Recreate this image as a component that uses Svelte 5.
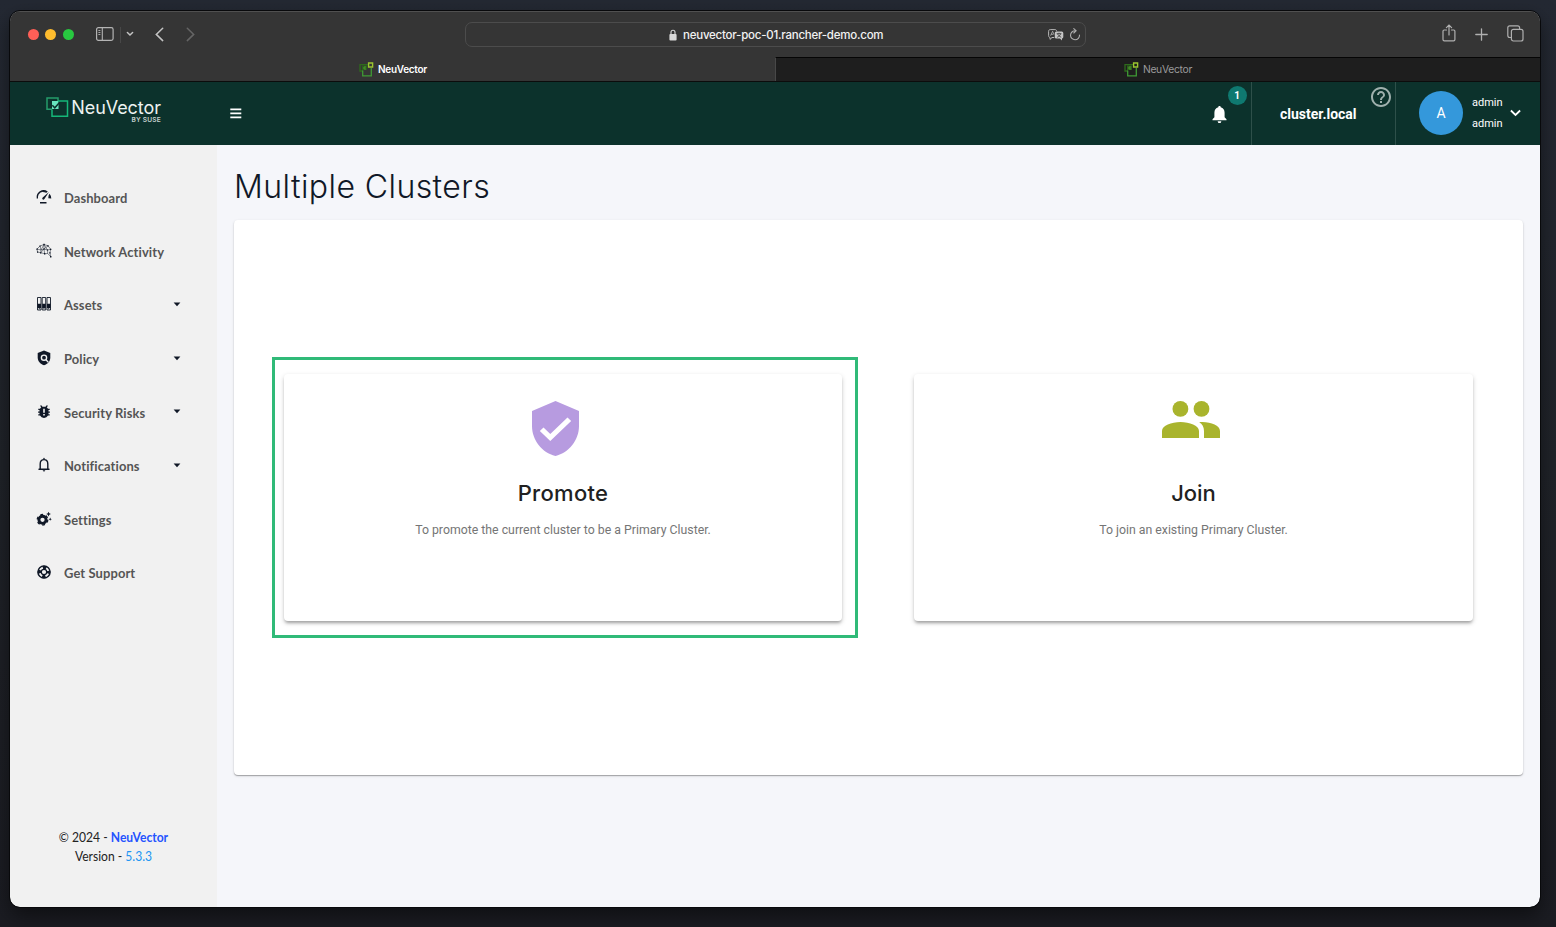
<script>
  const items = [
    { label: 'Dashboard', icon: 'gauge' },
    { label: 'Network Activity', icon: 'network' },
    { label: 'Assets', icon: 'assets', caret: true },
    { label: 'Policy', icon: 'policy', caret: true },
    { label: 'Security Risks', icon: 'bug', caret: true },
    { label: 'Notifications', icon: 'bell', caret: true },
    { label: 'Settings', icon: 'gear' },
    { label: 'Get Support', icon: 'support' }
  ];
</script>

{#snippet favicon()}
  <svg class="fav" width="15" height="15" viewBox="0 0 15 15" fill="none">
    <path d="M9 2.6H1V9h3" stroke="#2f6b1c" stroke-width="1.3" />
    <path d="M3 3.5h5V8H3z" fill="#2b5f1b" />
    <path d="M7 5H5v2h2" stroke="#4a9a2c" />
    <path d="M3.7 8.5v5.3h8.6V6" stroke="#3f9a35" stroke-width="1.3" />
    <path d="M9.6 1h4v4h-4z" stroke="#9bc62f" stroke-width="1.4" />
  </svg>
{/snippet}

<div class="desktop">
  <div class="window">
    <div class="toolbar">
      <div class="tools-left">
        <div class="lights"><i class="red"></i><i class="yellow"></i><i class="green"></i></div>
        <svg class="side" width="18" height="14" viewBox="0 0 18 14" fill="none" stroke="#b4b4b4">
          <rect x=".6" y=".6" width="16.5" height="12.8" rx="1.8" stroke-width="1.2" />
          <path d="M6.3 1v12" stroke-width="1.1" /><path d="M2.4 3.5h2M2.4 5.5h2M2.4 7.5h2" stroke-width=".9" />
        </svg>
        <span class="sep"></span>
        <svg class="mini" width="8" height="6" viewBox="0 0 8 6" fill="none" stroke="#c4c4c4" stroke-width="1.5" stroke-linecap="round"><path d="M1.4 1.500 4 4l2.600-2.500" /></svg>
        <svg class="back" width="9" height="15" viewBox="0 0 9 15" fill="none" stroke="#c4c4c4" stroke-width="1.500" stroke-linecap="round"><path d="M7.700 1.300 1.300 7.400l6.400 6.200" /></svg>
        <svg class="forward" width="9" height="15" viewBox="0 0 9 15" fill="none" stroke="#656565" stroke-width="1.500" stroke-linecap="round"><path d="m1.300 1.300 6.400 6.100-6.400 6.200" /></svg>
      </div>
      <div class="address">
        <svg class="lock" width="8" height="12" viewBox="0 0 8 12"><rect x=".4" y="5" width="7.200" height="6.400" rx="1" fill="#d8d8d8" /><path d="M2 5.300V3.200a2 2 0 0 1 4 0v2.100" fill="none" stroke="#d8d8d8" stroke-width="1.100" /></svg>
        <span class="url">neuvector-poc-01.rancher-demo.com</span>
        <svg class="translate" width="16" height="12" viewBox="0 0 16 12" fill="none">
          <path d="M6.300 8.500H4L2 10.400V8.500C1 8.300.6 7.600.6 6.700V2.300C.6 1.200 1.200.6 2.300.6h4.600c1 0 1.700.5 1.700 1.600" stroke="#b7b7b7" />
          <path d="m2.600 6.700 2-4.400 1.400 3M3.200 5.300h2.300" stroke="#b7b7b7" stroke-width=".8" />
          <path d="M8.300 2.500h5.500q1.500 0 1.500 1.500v4q0 1.400-1.300 1.500v2l-2-2H8.300q-1.500 0-1.500-1.500V4q0-1.500 1.500-1.500Z" fill="#c5c5c5" />
          <path d="M8.700 4.700h4.700M11 3.700v1M12.600 4.800c-.5 1.600-1.600 2.700-3.500 3.500m.5-3.500c.6 1.600 1.800 2.700 3.600 3.400" stroke="#353535" stroke-width=".8" />
        </svg>
        <svg class="reload" width="12" height="13" viewBox="0 0 12 13" fill="none" stroke="#adadad" stroke-width="1.100" stroke-linecap="round"><path d="M6.300 2.800A4.500 4.500 0 1 0 10.500 7M4.800.7l2.300 2.100-2.300 2.200" /></svg>
      </div>
      <div class="tools-right">
        <svg class="share" width="14" height="18" viewBox="0 0 14 18" fill="none" stroke="#b0b0b0" stroke-width="1.200" stroke-linecap="round"><path d="M4.500 6H2.200Q1 6 1 7.200v8.300q0 1.300 1.300 1.300h9.300q1.300 0 1.300-1.300V7.200Q12.900 6 11.700 6H9.500M7 11V1.200M4.400 3.700 7 1.100l2.600 2.600" /></svg>
        <svg width="13" height="13" viewBox="0 0 13 13" stroke="#b0b0b0" stroke-width="1.300" stroke-linecap="round"><path d="M6.500.8v11.400M.8 6.500h11.400" /></svg>
        <svg class="copies" width="17" height="17" viewBox="0 0 17 17" fill="none" stroke="#b0b0b0" stroke-width="1.200"><rect x="4.400" y="4.400" width="11.600" height="11.600" rx="2" /><path d="M4.400 12.500H2.800q-2 0-2-2V2.800q0-2 2-2h7.800q2 0 2 2v1.600" /></svg>
      </div>
    </div>

    <div class="tabs">
      <div class="tab active">{@render favicon()}<span>NeuVector</span></div>
      <div class="tab">{@render favicon()}<span>NeuVector</span></div>
    </div>

    <header>
      <div class="brand">
        <svg width="23" height="21" viewBox="0 0 23 21" fill="none">
          <path d="M6 12.200H1V1h11v3" stroke="#249c6a" stroke-width="1.500" />
          <path d="M6 4h6.500v8H6z" fill="#69e5bf" />
          <path d="M6 12.500v6.800h15.500V4H12" stroke="#15b779" stroke-width="1.500" />
          <path d="m6.300 8.300 2.500 2.500 4.500-5" stroke="#0c322c" stroke-width="1.500" />
        </svg>
        <div class="wordmark"><span class="name">NeuVector</span><span class="by">BY SUSE</span></div>
      </div>
      <svg class="burger" width="12" height="11" viewBox="0 0 12 11" fill="#fff"><path d="M.3.5h11v1.700H.3zM.3 4.500h11v1.700H.3zM.3 8.500h11v1.700H.3z" /></svg>
      <div class="alerts">
        <svg width="15" height="18" viewBox="0 0 15 18" fill="#fff"><path d="M7.500 0c.8 0 1.200.5 1.200 1.300C11.300 2 12.600 4 12.600 6.700v4.600l1.900 2v1H.5v-1l1.900-2V6.700C2.400 4 3.700 2 6.300 1.300 6.300.5 6.700 0 7.500 0ZM5.700 15.200h3.600c0 1.200-.8 1.900-1.800 1.900s-1.800-.7-1.800-1.900Z" /></svg>
        <span class="badge">1</span>
      </div>
      <div class="cluster">
        <span>cluster.local</span>
        <svg class="help" width="24" height="24" viewBox="0 0 24 24" fill="#9fb0ad"><path d="M11 18h2v-2h-2v2zm1-16C6.480 2 2 6.480 2 12s4.480 10 10 10 10-4.480 10-10S17.520 2 12 2zm0 18c-4.410 0-8-3.590-8-8s3.590-8 8-8 8 3.590 8 8-3.590 8-8 8zm0-14c-2.210 0-4 1.790-4 4h2c0-1.100.9-2 2-2s2 .9 2 2c0 2-3 1.750-3 5h2c0-2.250 3-2.500 3-5 0-2.210-1.790-4-4-4z" /></svg>
      </div>
      <div class="user">
        <span class="avatar">A</span>
        <div class="names"><span>admin</span><span>admin</span></div>
        <svg width="11" height="8" viewBox="0 0 11 8" fill="none" stroke="#fff" stroke-width="1.800"><path d="m.9 1.500 4.600 4.400 4.600-4.400" /></svg>
      </div>
    </header>

    <div class="body">
      <aside>
        <nav>
          {#each items as item}
            <div class="item">
              <svg class="icon" width="16" height="16" viewBox="0 0 16 16" fill="#101827" stroke="#101827" stroke-width="0">
                {#if item.icon === 'gauge'}
                  <path d="M1.500 9.500A6.300 6.300 0 0 1 11.300 3" fill="none" stroke-width="1.300" />
                  <path d="M4.500 3.200Q7.700.9 11.300 2.700l-1.200 1Q7.500 2.600 4.500 3.200Z" />
                  <path d="m13 2.900-4.600 7.200q-.9 1-1.900.2-.8-1 .2-1.900ZM13.600 4.800q1.600 2 1.700 4.800l-3-.3.300-2.700ZM4 13.100h6.500v1.400H4z" />
                {:else if item.icon === 'network'}
                  <path d="m1 6 3-3 4-1.500 4 1.300 2.700 3.500-.8 3.500.8 3.700-3-3-3 .2-4-1L1.500 9 1 6l4 1 3-1 3.500 1 3-.7M4 3l1 4-.3 2.700M8 1.500V6l.7 4.700M12 2.800 8 6 4.700 9.700M5 7l3-5.500L11.500 7l.2 3.500" fill="none" stroke-width=".5" />
                  <path d="M.4 5.400h1.300v1.300H.4zM3.400 2.400h1.200v1.200H3.400zM7.400.8h1.300v1.300H7.400zM11.400 2.200h1.300v1.300h-1.300zM14 5.700h1.300V7H14zM13.300 9.200h1.300v1.300h-1.300zM14 13h1.400v1.400H14zM1 8.500h1.200v1.200H1zM4 9.200h1.300v1.200H4zM8 10.100h1.300v1.300H8zM7.400 5.400h1.200v1.200H7.400zM10.900 6.400h1.200v1.200h-1.200z" />
                {:else if item.icon === 'assets'}
                  <path d="M1.500 1.500h3.500v12.500H1.500zM6.200 1.500h3.500v12.500H6.200zM11 1.500h3.500v12.500H11z" fill="#f1f1f1" stroke-width=".9" />
                  <path d="M1.500 7.800H5V12H1.500zM6.200 7.800h3.500V12H6.200zM11 7.800h3.500V12H11zM2.800 12h.9v1.200h-.9zM7.500 12h.9v1.200h-.9zM12.300 12h.9v1.200h-.9z" />
                {:else if item.icon === 'policy'}
                  <path d="m8 .5 6.300 2.500v4.500c0 3.700-2.500 6.600-6.300 7.800-3.800-1.200-6.300-4.100-6.300-7.800V3Z" />
                  <circle cx="8" cy="7.700" r="2.600" fill="none" stroke="#f1f1f1" stroke-width="1.400" /><path d="m9.700 9.500 2.600 2.700" stroke="#f1f1f1" stroke-width="1.300" />
                {:else if item.icon === 'bug'}
                  <path d="m5 1 1.500 1.700h3L11 1l.8.9-1 1.300 1.200 1.600h1.700V6h-1.200v1.500h1.400v1.300h-1.400v1.500h1.200v1.300H12A4.500 4.500 0 0 1 8 14a4.500 4.500 0 0 1-4-2.400H2.300v-1.300h1.200V8.800H2.100V7.500h1.400V6H2.300V4.800H4l1.200-1.600-1-1.300Z" /><path d="M7.200 4.800h1.600v4H7.200zM7.200 10h1.600v1.500H7.200z" fill="#f1f1f1" />
                {:else if item.icon === 'bell'}
                  <path d="M8 1.500v1M3 12.300h10M4.200 12V7c0-2.800 1.400-4.400 3.800-4.400s3.800 1.600 3.800 4.400v5" fill="none" stroke-width="1.400" stroke-linecap="round" /><path d="M6.700 13.200h2.600Q9 14.500 8 14.500t-1.300-1.300Z" />
                {:else if item.icon === 'gear'}
                  <circle cx="6.500" cy="8.800" r="3.600" fill="none" stroke-width="2.900" />
                  <circle cx="6.500" cy="8.800" r="5.200" fill="none" stroke-width="1.500" stroke-dasharray="2.700 2.745" />
                  <path d="m12.500.7.8 1.600 1.600.8-1.600.7-.8 1.600-.7-1.600-1.600-.7 1.600-.8ZM14.200 6.600l.5 1.100 1.100.5-1.100.5-.5 1.100-.5-1.100-1.100-.5 1.100-.5Z" />
                {:else}
                  <circle cx="8" cy="8" r="6.100" fill="none" stroke-width="1.400" /><circle cx="8" cy="8" r="2.700" fill="none" stroke-width="1.200" />
                  <circle cx="8" cy="8" r="4.600" fill="none" stroke-width="3.400" stroke-dasharray="3.600 3.626" stroke-dashoffset="1.800" />
                {/if}
              </svg>
              <span class="label">{item.label}</span>
              {#if item.caret}
                <svg class="caret" width="8" height="5" viewBox="0 0 8 5" fill="#101827"><path d="M.6.500h6.800L4 4.200Z" /></svg>
              {/if}
            </div>
          {/each}
        </nav>
        <div class="foot">
          <div>© 2024 - <b>NeuVector</b></div>
          <div>Version - <span>5.3.3</span></div>
        </div>
      </aside>

      <main>
        <h1>Multiple Clusters</h1>
        <section class="panel">
          <article class="card selected">
            <svg class="art" width="47" height="55" viewBox="3 1 18 22" preserveAspectRatio="none" fill="#b79be0"><path d="M12 1L3 5v6c0 5.550 3.840 10.740 9 12 5.160-1.260 9-6.450 9-12V5l-9-4zm-2 16l-4-4 1.410-1.410L10 14.170l6.590-6.590L18 9l-8 8z" /></svg>
            <h2 class="promote">Promote</h2>
            <p>To promote the current cluster to be a Primary Cluster.</p>
          </article>
          <article class="card">
            <svg class="art people" width="58" height="55" viewBox="0 0 58 55" fill="#a9b42d">
              <circle cx="18.400" cy="7.900" r="7.900" /><circle cx="39.500" cy="7.900" r="7.900" />
              <path d="M0 37v-7c0-5.300 9.500-9 18.500-9S37 24.700 37 30v7ZM37.200 21.300C47 20.200 58 24.300 58 30v7H42v-7c0-4-1.700-6.800-4.800-8.700Z" />
            </svg>
            <h2 class="join">Join</h2>
            <p>To join an existing Primary Cluster.</p>
          </article>
        </section>
      </main>
    </div>
  </div>
</div>

<style>
  :global(body) { margin: 0; }
  * { box-sizing: border-box; }
  svg { display: block; flex: none; }
  .desktop { width: 1556px; height: 927px; padding: 11px 16px 20px 10px; overflow: hidden; background: linear-gradient(#242933, #202329 50%, #1b1c22); }
  .window { width: 1530px; height: 896px; border-radius: 10px; overflow: hidden; display: flex; flex-direction: column; background: #f5f6fa; outline: 1px solid #08090b; box-shadow: 0 8px 20px rgba(0, 0, 0, .5); }
  .toolbar { height: 46px; flex: none; background: #353535; border-top: 1px solid #505050; display: flex; align-items: center; justify-content: space-between; padding: 0 16px 0 17px; }
  .tools-left { width: 438px; flex: none; display: flex; align-items: center; }
  .lights { display: flex; gap: 6.500px; margin: 0 22px 0 .5px; }
  .lights i { width: 11px; height: 11px; border-radius: 50%; }
  .red { background: #ff5f57; } .yellow { background: #febc2e; } .green { background: #28c840; }
  .side, .mini, .back, .forward { margin-top: -1px; }
  .sep { width: 1px; height: 16px; background: #484848; margin: 0 5.500px 0 6px; }
  .back { margin-left: 20.500px; margin-right: 22px; }
  .address { width: 621px; flex: none; height: 25px; border: 1px solid #4c4c4c; border-radius: 7px; display: flex; align-items: center; padding: 0 4px 0 203px; font: 500 11.500px Inter, sans-serif; color: #f2f2f2; }
  .url { margin-left: 6px; width: 201px; white-space: nowrap; letter-spacing: -.23px; }
  .translate { margin-left: auto; margin-right: 5px; }
  .tools-right { width: 438px; flex: none; display: flex; align-items: center; justify-content: flex-end; gap: 19px; }
  .share { margin-top: -3px; } .copies { margin-top: -2px; }
  .tabs { height: 25px; flex: none; display: flex; border-bottom: 1px solid #0c0c0c; background: #353535; }
  .tab { flex: 1; display: flex; align-items: center; justify-content: center; gap: 4px; padding-bottom: 1px; font: 400 10.300px Inter, sans-serif; letter-spacing: -.27px; color: #9b9b9b; background: #1e1e1e; border-top: 1px solid #050505; border-left: 1px solid #484848; }
  .tab span { margin-top: -1px; }
  .tab.active { background: #353535; border-color: #353535; color: #fff; font-weight: 600; font-size: 10px; }
  header { height: 63px; flex: none; background: #0c322c; display: flex; align-items: stretch; color: #fff; }
  .brand { display: flex; align-items: flex-start; width: 220px; padding: 15px 0 0 36px; }
  .wordmark { display: flex; flex-direction: column; align-items: flex-end; width: 90px; margin-left: 2px; }
  .name { font: 400 18px/21px Inter, sans-serif; white-space: nowrap; color: #edf3f1; letter-spacing: -.05px; }
  .by { font: 600 6.600px/8px Inter, sans-serif; color: #c6d3d0; letter-spacing: .2px; margin-top: -2px; }
  .burger { align-self: center; }
  .alerts { position: relative; margin-left: auto; width: 39px; display: flex; align-items: center; padding-top: 2px; }
  .badge { position: absolute; left: 15.500px; top: 4px; width: 19px; height: 19px; border-radius: 50%; background: #0f7970; font: 700 10px/19px Roboto, sans-serif; text-align: center; }
  .cluster { position: relative; width: 144px; border-left: 1px solid #2e504a; display: flex; align-items: center; padding-left: 28px; font: 700 14px Roboto, sans-serif; }
  .help { position: absolute; left: 117px; top: 2.500px; }
  .user { width: 145px; border-left: 1px solid #2e504a; display: flex; align-items: center; padding: 0 0 1px 23px; }
  .avatar { width: 44px; height: 44px; border-radius: 50%; background: #3498db; text-align: center; font: 400 14px/44px Roboto, sans-serif; }
  .names { display: flex; flex-direction: column; margin: 0 8px 0 9px; width: 30px; font: 400 11px/21px Roboto, sans-serif; }
  .body { flex: 1; display: flex; min-height: 0; }
  aside { width: 207px; background: #f1f1f1; display: flex; flex-direction: column; justify-content: space-between; padding: 26px 0 41px; }
  .item { height: 53.600px; display: flex; align-items: center; padding: 0 36px 0 26px; }
  .icon { margin-top: -1px; }
  .label { margin-left: 12px; font: 700 14px Lato, sans-serif; color: #555; white-space: nowrap; letter-spacing: .1px; transform: scaleX(.925); transform-origin: left; }
  .caret { margin: -1px 0 0 auto; }
  .foot { font: 400 13px/19px Lato, sans-serif; color: #222; text-align: center; transform: scaleX(.93); }
  .foot b { color: #2453ff; } .foot span { color: #2196f3; }
  main { flex: 1; padding: 0 17px; }
  h1 { margin: 0; height: 75px; padding-top: 21px; font: 300 32px/42px Inter, sans-serif; letter-spacing: .42px; color: #101827; white-space: nowrap; }
  .panel { height: 555px; background: #fff; border-radius: 4px; box-shadow: 0 1px 1px rgba(0, 0, 0, .28), 0 1px 3px rgba(0, 0, 0, .12); display: flex; gap: 72px; padding: 154px 50px; }
  .card { position: relative; width: 558px; flex: none; border-radius: 4px; background: #fff; box-shadow: 0 3px 3px -1px rgba(0, 0, 0, .25), 0 2px 5px rgba(0, 0, 0, .18); display: flex; flex-direction: column; align-items: center; padding-top: 27px; }
  .card + .card { width: 559px; }
  .selected::after { content: ''; position: absolute; inset: -17px -16px -17px -12px; border: 3px solid #30ba78; }
  .art { margin-right: 15px; } .people { margin-right: 6px; }
  h2 { margin: 22px 0 0; font: 500 22px/30px Inter, sans-serif; color: #212121; }
  .promote { letter-spacing: .3px; }
  p { margin: 13px 0 0; font: 400 12.300px/18px Roboto, sans-serif; color: #757575; white-space: nowrap; }
</style>
